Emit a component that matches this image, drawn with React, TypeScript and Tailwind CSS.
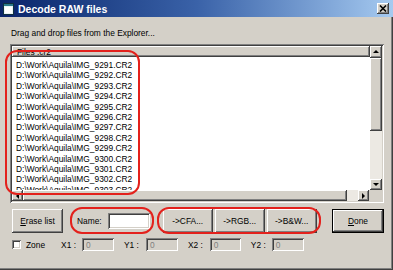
import React from "react";

const raised =
  "bg-[#d4d0c8] shadow-[inset_-1px_-1px_0_#404040,inset_1px_1px_0_#ffffff,inset_-2px_-2px_0_#808080,inset_2px_2px_0_#d4d0c8]";
const sunken =
  "shadow-[inset_1px_1px_0_#808080,inset_-1px_-1px_0_#ffffff,inset_2px_2px_0_#404040,inset_-2px_-2px_0_#d4d0c8]";

const files = [
  "9291", "9292", "9293", "9294", "9295", "9296", "9297", "9298", "9299", "9300", "9301", "9302", "9303",
];

function Tri({ dir }: { dir: "up" | "down" | "left" | "right" }) {
  const pts = {
    up: "1,5 7,5 4,2",
    down: "1,2 7,2 4,5",
    left: "5,1 5,7 2,4",
    right: "2,1 2,7 5,4",
  }[dir];
  return (
    <svg width="8" height="8" viewBox="0 0 8 8">
      <polygon points={pts} fill="#000" />
    </svg>
  );
}

function Btn({ children, w, def }: { children: React.ReactNode; w: string; def?: boolean }) {
  return (
    <div className={`${w} h-[24px] ${def ? "border border-black" : ""}`}>
      <div className={`w-full h-full ${raised} flex items-center justify-center text-black`}>{children}</div>
    </div>
  );
}

function Field({ w }: { w: string }) {
  return (
    <div className={`${w} h-[13px] bg-[#d4d0c8] ${sunken} flex items-center pl-[4px] text-[#808080]`}>0</div>
  );
}

export default function App() {
  return (
    <div
      className="relative w-[393px] h-[270px] bg-[#d4d0c8] overflow-hidden text-[8.4px] leading-[10px] text-black shadow-[inset_-1px_-1px_0_#404040,inset_-2px_-2px_0_#808080]"
      style={{ fontFamily: '"Liberation Sans", Arial, sans-serif' }}
    >
      {/* title bar */}
      <div className="h-[17px] bg-gradient-to-r from-[#0a246a] via-[#3a62a8] to-[#a6caf0] flex items-center pl-[3px] pr-[4px]">
        <svg width="11" height="12" viewBox="0 0 11 12" className="mr-[4px]">
          <rect x="0.5" y="0.5" width="10" height="11" fill="#e8f4f4" stroke="#103040" />
          <rect x="1" y="1" width="9" height="2" fill="#2a7a8a" />
          <rect x="2" y="4" width="7" height="6" fill="#ffffff" />
        </svg>
        <span className="text-white font-bold text-[10.5px] leading-[12px]">Decode RAW files</span>
        <div className={`ml-auto w-[12px] h-[11px] ${raised} flex items-center justify-center`}>
          <svg width="8" height="7" viewBox="0 0 8 7">
            <path d="M1 0.5 L7 6.5 M7 0.5 L1 6.5" stroke="#000" strokeWidth="1.6" />
          </svg>
        </div>
      </div>

      <div className="pl-[10px] pr-[9px]">
        <div className="mt-[11px] pl-[1px]">Drag and drop files from the Explorer...</div>

        {/* list */}
        <div className={`mt-[6px] h-[159px] bg-white ${sunken} p-[2px] flex flex-col`}>
          <div className="flex flex-1 min-h-0">
            <div className="flex-1 min-w-0 flex flex-col overflow-hidden">
              <div className={`h-[11px] shrink-0 ${raised} pl-[5px] flex items-center`}>Files .cr2</div>
              <div className="pt-[3px] pl-[4px] overflow-hidden">
                {files.map((f) => (
                  <div key={f} className="h-[10.4px] leading-[10.4px] whitespace-nowrap">
                    {`D:\\Work\\Aquila\\IMG_${f}.CR2`}
                  </div>
                ))}
              </div>
            </div>
            {/* vertical scrollbar */}
            <div className="w-[12px] flex flex-col bg-[#ece9e3]">
              <div className={`h-[12px] ${raised} flex items-center justify-center`}><Tri dir="up" /></div>
              <div className={`h-[73px] ${raised}`} />
              <div className="flex-1" />
              <div className={`h-[11px] ${raised} flex items-center justify-center`}><Tri dir="down" /></div>
            </div>
          </div>
          {/* horizontal scrollbar */}
          <div className="h-[11px] flex bg-[#ece9e3]">
            <div className={`w-[11px] ${raised} flex items-center justify-center`}><Tri dir="left" /></div>
            <div className={`w-[324px] ${raised}`} />
            <div className="flex-1" />
            <div className={`w-[11px] ${raised} flex items-center justify-center`}><Tri dir="right" /></div>
            <div className="w-[13px] bg-[#d4d0c8]" />
          </div>
        </div>

        {/* buttons row */}
        <div className="mt-[6px] flex items-center pl-[2px]">
          <Btn w="w-[51px]"><span><u>E</u>rase list</span></Btn>
          <span className="ml-[14px]">Name:</span>
          <div className={`ml-[6px] w-[42px] h-[16px] bg-white ${sunken}`} />
          <div className="ml-[13px] flex gap-[2px]">
            <Btn w="w-[50px]">-&gt;CFA...</Btn>
            <Btn w="w-[50px]">-&gt;RGB...</Btn>
            <Btn w="w-[50px]">-&gt;B&amp;W...</Btn>
          </div>
          <div className="ml-auto">
            <Btn w="w-[52px]" def><span><u>D</u>one</span></Btn>
          </div>
        </div>

        {/* zone row */}
        <div className="mt-[5px] flex items-center pl-[2px]">
          <div className={`w-[9px] h-[9px] bg-white ${sunken}`} />
          <span className="ml-[5px]">Zone</span>
          <span className="ml-[16px]">X1 :</span>
          <div className="ml-[6px]"><Field w="w-[32px]" /></div>
          <span className="ml-[10px]">Y1 :</span>
          <div className="ml-[7px]"><Field w="w-[32px]" /></div>
          <span className="ml-[10px]">X2 :</span>
          <div className="ml-[7px]"><Field w="w-[31px]" /></div>
          <span className="ml-[10px]">Y2 :</span>
          <div className="ml-[6px]"><Field w="w-[32px]" /></div>
        </div>
      </div>

      {/* red annotation ovals */}
      <div className="absolute left-[5px] top-[50px] w-[135px] h-[145px] border-2 border-[#e3211c] rounded-[12px] pointer-events-none" />
      <div className="absolute left-[70px] top-[207px] w-[84px] h-[27px] border-2 border-[#e3211c] rounded-[12px] pointer-events-none" />
      <div className="absolute left-[157px] top-[207px] w-[164px] h-[27px] border-2 border-[#e3211c] rounded-[12px] pointer-events-none" />
    </div>
  );
}
